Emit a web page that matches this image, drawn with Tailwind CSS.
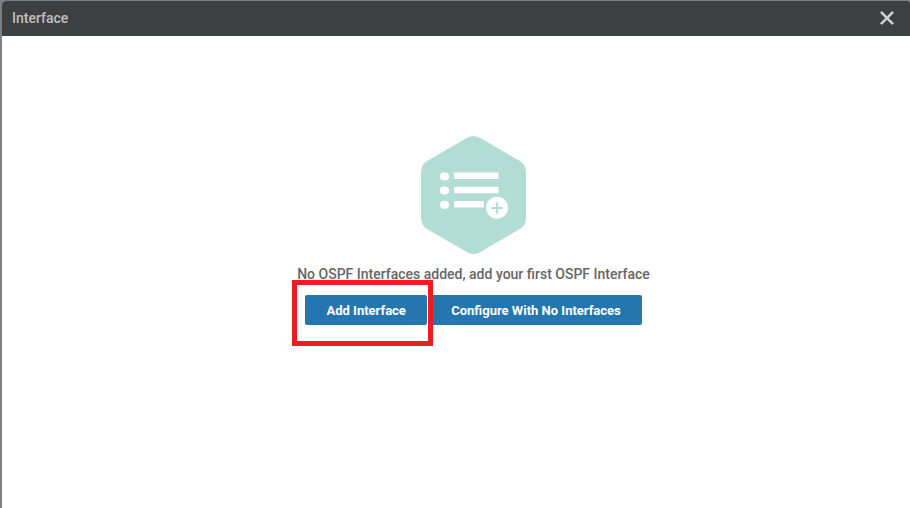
<!DOCTYPE html>
<html lang="en">
<head>
<meta charset="utf-8">
<meta name="viewport" content="width=device-width, initial-scale=1">
<title>Interface</title>
<script src="https://cdn.jsdelivr.net/npm/@tailwindcss/browser@4"></script>
</head>
<body class="flex min-h-screen bg-[#7e7f82] pt-px pl-[2px] font-[Roboto,sans-serif]">
<section role="dialog" aria-labelledby="title" class="flex flex-1 flex-col overflow-hidden rounded-tl rounded-tr-xs bg-white">
  <header class="flex h-[35px] items-center justify-between bg-[#3e3f41] pr-4 pb-[2px] pl-[10px]">
    <h1 id="title" class="text-sm font-medium text-[#c0c0c0]">Interface</h1>
    <button type="button" aria-label="Close" class="text-[#d0d0d0]">
      <svg class="size-[14px]" viewBox="0 0 14 14" fill="none" stroke="currentColor" stroke-width="2.5"><path d="M.9.9l12.200 12.200M13.100.9L.9 13.100"/></svg>
    </button>
  </header>
  <main class="flex flex-col items-center pt-[100px] pl-[35px]">
    <svg class="h-[118px] w-[105px]" viewBox="0 0 105 118" aria-hidden="true">
      <path fill="#b2ddd4" d="M46.5 1.6Q52.5-1.6 58.5 1.6L98.5 24.8Q105 28.5 105 36V82Q105 89.5 98.5 93.2L58.5 116.4Q52.5 119.6 46.5 116.4L6.5 93.2Q0 89.5 0 82V36Q0 28.5 6.5 24.8Z"/>
      <g fill="#fff">
        <rect x="19" y="36.500" width="9.200" height="8" rx="4"/>
        <rect x="19" y="50.500" width="9.200" height="8" rx="4"/>
        <rect x="19" y="64.800" width="9.200" height="8" rx="4"/>
        <rect x="33" y="36.500" width="44.500" height="6.500" rx="1"/>
        <rect x="33" y="50.800" width="44.500" height="6.500" rx="1"/>
        <rect x="33" y="65" width="30" height="6.500" rx="1"/>
        <circle cx="76" cy="71.800" r="11"/>
      </g>
      <path stroke="#b2ddd4" stroke-width="2" d="M70.500 72h11M76 66.500v11"/>
    </svg>
    <p class="mt-[10px] text-sm font-medium text-[#666]">No OSPF Interfaces added, add your first OSPF Interface</p>
    <div class="mt-[11px] flex gap-[3px]">
      <div class="relative">
        <button type="button" class="h-[30px] min-w-[122px] rounded-xs bg-[#2576ae] px-5 pt-[2px] text-[13px] font-bold text-white">Add Interface</button>
        <span class="pointer-events-none absolute -top-[15px] -right-[6px] -bottom-[21px] -left-[13px] z-10 border-5 border-[#ed1c24]"></span>
      </div>
      <button type="button" class="h-[30px] rounded-xs bg-[#2576ae] px-[21px] pt-[2px] text-[13px] font-bold text-white">Configure With No Interfaces</button>
    </div>
  </main>
</section>
</body>
</html>
